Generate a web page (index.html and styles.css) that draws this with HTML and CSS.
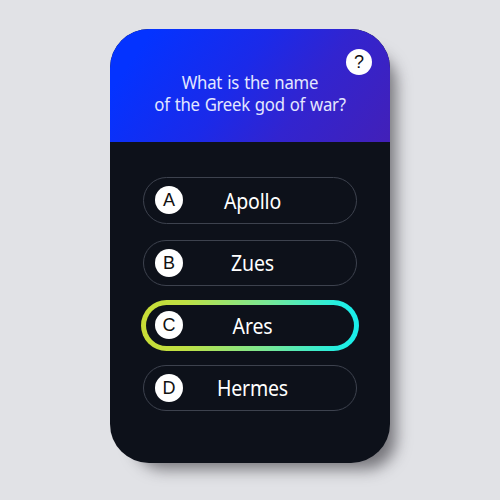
FILE: index.html
```html
<!DOCTYPE html>
<html lang="en">
<head>
<meta charset="utf-8">
<title>Quiz</title>
<link rel="stylesheet" href="styles.css">
</head>
<body>
<main class="card">
  <header class="question">
    <h1 class="question-text"><span class="line-one">What is the name</span><br><span class="line-two">of the Greek god of war?</span></h1>
    <button class="help">?</button>
  </header>
  <div class="options">
    <button class="option"><span class="letter">A</span><span class="label">Apollo</span></button>
    <button class="option"><span class="letter">B</span><span class="label">Zues</span></button>
    <button class="option selected"><span class="letter">C</span><span class="label">Ares</span></button>
    <button class="option"><span class="letter">D</span><span class="label">Hermes</span></button>
  </div>
</main>
</body>
</html>
```
FILE: styles.css
```css
* { box-sizing: border-box; }

body {
  margin: 0;
  height: 500px;
  padding-top: 29px;
  overflow: hidden;
  background: #e1e2e6;
  font-family: "Noto Sans", sans-serif;
}

button {
  padding: 0;
  border: 0;
  font: inherit;
}

.card {
  width: 280px;
  height: 434px;
  margin: 0 auto;
  border-radius: 39px;
  background: #0d111a;
  box-shadow: 15px 15px 15px -9px rgba(45, 43, 50, 0.6);
}

.question {
  position: relative;
  height: 113px;
  padding-top: 42px;
  border-radius: 39px 39px 0 0;
  background: linear-gradient(125deg, #0433ff 12%, #1b2ae9 45%, #3224cf 68%, #4220b8 100%);
  text-align: center;
}

.question-text {
  margin: 0;
  font-size: 18px;
  font-weight: 400;
  line-height: 22px;
  white-space: nowrap;
  color: #e4e7ff;
  transform: scaleX(0.93);
}

.line-one { letter-spacing: -0.25px; word-spacing: 1px; }
.line-two { letter-spacing: -0.3px; word-spacing: 1px; }

.help {
  position: absolute;
  top: 20px;
  right: 18px;
  width: 26px;
  height: 26px;
  border-radius: 50%;
  background: #fff;
  color: #111;
  font: 18px/26px "Liberation Sans", sans-serif;
}

.options {
  display: grid;
  gap: 16px;
  padding: 35px 33px 0;
}

.option {
  display: grid;
  grid-template-columns: 28px 1fr 23px;
  align-items: center;
  height: 46.5px;
  padding: 0 11px;
  border: 1px solid #3d424e;
  border-radius: 24px;
  background: transparent;
  color: #fff;
}

.letter {
  width: 28px;
  height: 28px;
  border-radius: 50%;
  background: #fff;
  color: #111;
  font: 18px/28px "Liberation Sans", sans-serif;
}

.label {
  padding-top: 1px;
  font-size: 21px;
  line-height: 28px;
  letter-spacing: -0.2px;
  transform: scaleX(0.93);
}

.selected {
  height: 50.5px;
  margin: -2px;
  padding: 0 9px;
  border: 5px solid transparent;
  border-radius: 26px;
  background:
    linear-gradient(#0d111a, #0d111a) padding-box,
    linear-gradient(90deg, #c9dd36 0%, #bfe044 20%, #78e796 58%, #25eee0 90%, #18eeec 100%) border-box;
}
```
